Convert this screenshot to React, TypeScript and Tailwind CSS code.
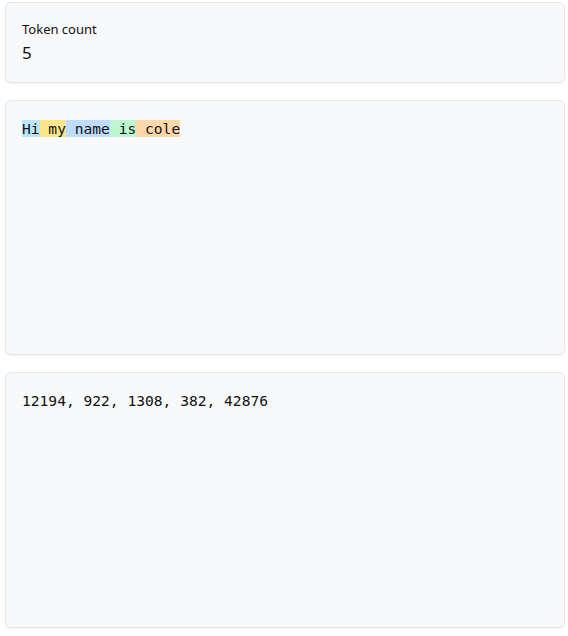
const tokens = [
  { text: "Hi", color: "bg-[#bae6fd]" },
  { text: " my", color: "bg-[#fde68a]" },
  { text: " name", color: "bg-[#bfdbfe]" },
  { text: " is", color: "bg-[#bbf7d0]" },
  { text: " cole", color: "bg-[#fed7aa]" },
];

const ids = [12194, 922, 1308, 382, 42876];

export default function App() {
  return (
    <div className="w-[568px] h-[636px] bg-white pl-[5px] pr-[3px] pt-[2px] flex flex-col gap-[17px] font-['Noto_Sans',sans-serif]">
      {/* token count */}
      <div className="h-[81px] rounded-md border border-[#e4e6e8] bg-[#f8f9fa] shadow-[0_1px_2px_rgba(0,0,0,0.06)] px-4 pt-[16px]">
        <div className="text-[13px] leading-[20px] text-[#111]">Token count</div>
        <div className="text-[17px] leading-[24px] text-[#111] mt-[2px]">5</div>
      </div>

      {/* highlighted tokens */}
      <div className="h-[255px] rounded-md border border-[#e4e6e8] bg-[#f8f9fa] shadow-[0_1px_2px_rgba(0,0,0,0.06)] px-4 pt-[18px]">
        <div className="font-['DejaVu_Sans_Mono',monospace] text-[14.6px] leading-[19px] text-[#111] whitespace-pre">
          {tokens.map((t, i) => (
            <span key={i} className={t.color}>
              {t.text}
            </span>
          ))}
        </div>
      </div>

      {/* token ids */}
      <div className="h-[256px] rounded-md border border-[#e4e6e8] bg-[#f8f9fa] shadow-[0_1px_2px_rgba(0,0,0,0.06)] px-4 pt-[18px]">
        <div className="font-['DejaVu_Sans_Mono',monospace] text-[14.6px] leading-[19px] text-[#111]">
          {ids.join(", ")}
        </div>
      </div>
    </div>
  );
}
